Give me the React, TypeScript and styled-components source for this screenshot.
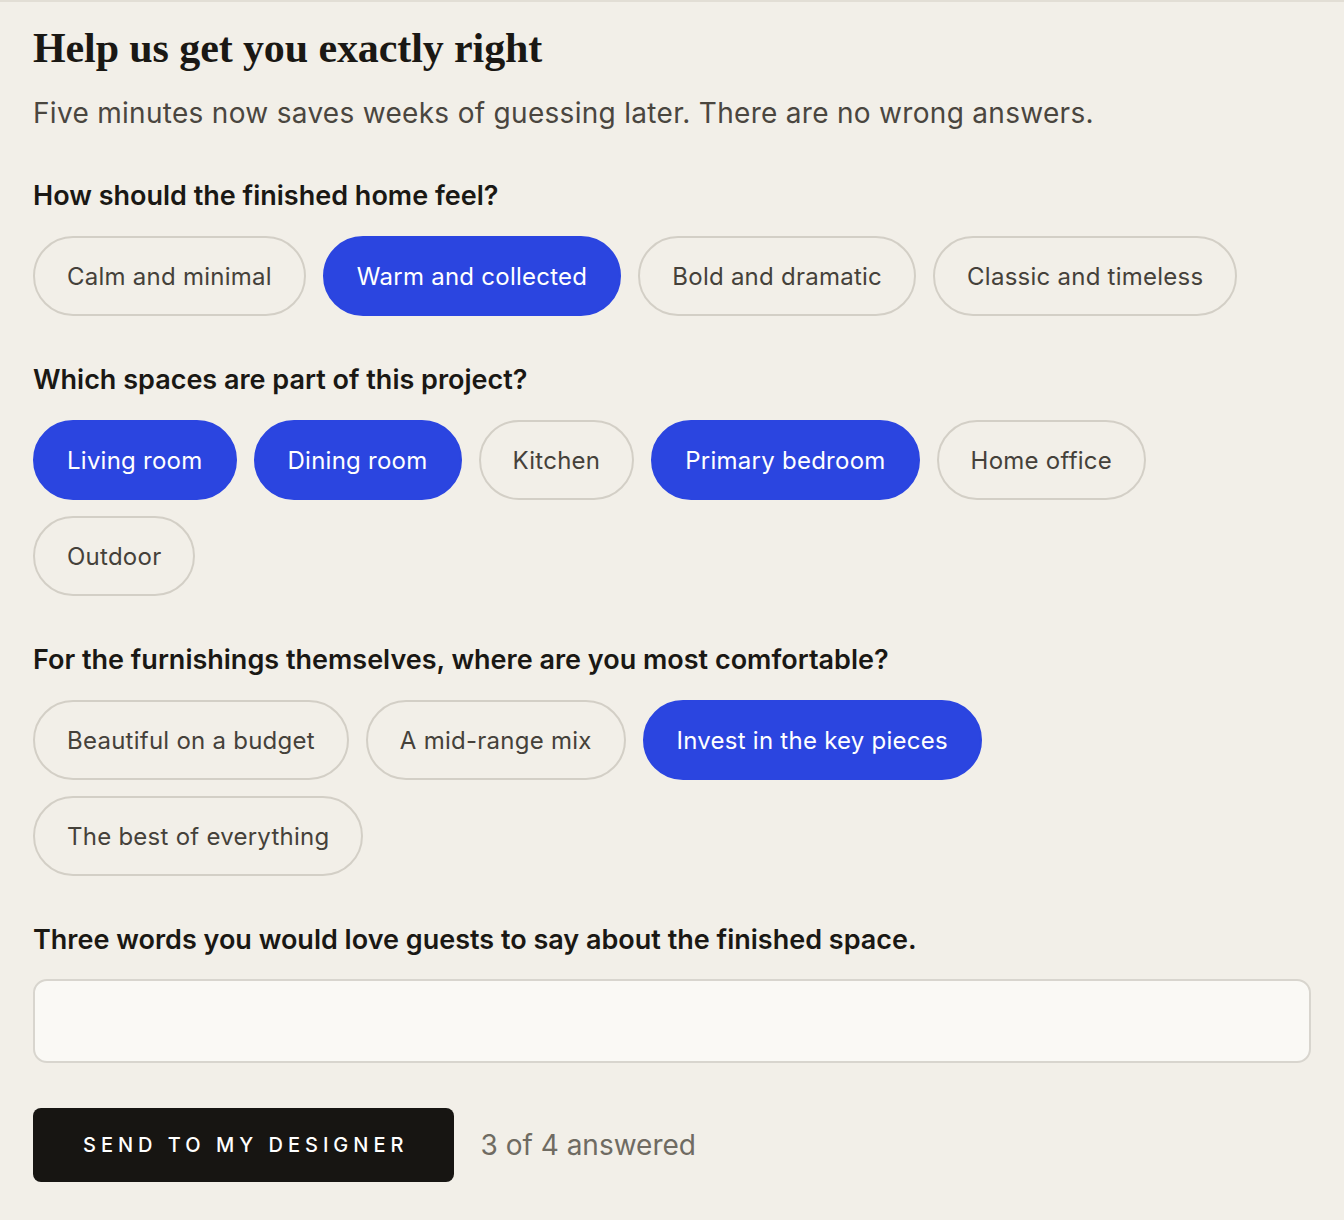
import React, { useState } from "react"
import styled, { createGlobalStyle } from "styled-components"

const GlobalStyle = createGlobalStyle`
  html, body {
    margin: 0;
    padding: 0;
    background: #f2efe8;
  }
  body {
    font-family: Inter, "Noto Sans", sans-serif;
    color: #1a1814;
  }
`

const questions = [
  {
    label: "How should the finished home feel?",
    options: ["Calm and minimal", "Warm and collected", "Bold and dramatic", "Classic and timeless"],
    initial: ["Warm and collected"],
  },
  {
    label: "Which spaces are part of this project?",
    options: ["Living room", "Dining room", "Kitchen", "Primary bedroom", "Home office", "Outdoor"],
    initial: ["Living room", "Dining room", "Primary bedroom"],
  },
  {
    label: "For the furnishings themselves, where are you most comfortable?",
    options: ["Beautiful on a budget", "A mid-range mix", "Invest in the key pieces", "The best of everything"],
    initial: ["Invest in the key pieces"],
  },
]

const App: React.FC = () => {
  const [picked, setPicked] = useState<string[][]>(questions.map((q) => q.initial))
  const [words, setWords] = useState("")

  const toggle = (qi: number, option: string) => {
    setPicked((prev) =>
      prev.map((list, i) => {
        if (i !== qi) return list
        return list.includes(option) ? list.filter((o) => o !== option) : [...list, option]
      })
    )
  }

  const answered = picked.filter((p) => p.length > 0).length + (words.trim() ? 1 : 0)

  return (
    <Root>
      <GlobalStyle />
      <Title>Help us get you exactly right</Title>
      <Intro>Five minutes now saves weeks of guessing later. There are no wrong answers.</Intro>

      {questions.map((q, qi) => (
        <Question key={q.label}>
          <Label>{q.label}</Label>
          <Pills>
            {q.options.map((option) => (
              <Pill key={option} $active={picked[qi].includes(option)} onClick={() => toggle(qi, option)}>
                {option}
              </Pill>
            ))}
          </Pills>
        </Question>
      ))}

      <Question>
        <Label>Three words you would love guests to say about the finished space.</Label>
        <WordsInput value={words} onChange={(e) => setWords(e.target.value)} />
      </Question>

      <Footer>
        <SendButton>Send to my designer</SendButton>
        <Progress>{answered} of 4 answered</Progress>
      </Footer>
    </Root>
  )
}

export default App

const Root = styled.div`
  border-top: 2px solid #e2ded5;
  padding: 21px 33px 40px 33px;
  min-height: 1220px;
  box-sizing: border-box;
`
const Title = styled.h1`
  margin: 0;
  font-family: "Liberation Serif", "DejaVu Serif", serif;
  font-weight: 700;
  font-size: 42px;
  line-height: 50px;
  letter-spacing: -0.1px;
  color: #1a1814;
`
const Intro = styled.p`
  margin: 20px 0 0 0;
  font-size: 28px;
  line-height: 40px;
  letter-spacing: 0.3px;
  color: #4a463f;
`
const Question = styled.section`
  margin-top: 47px;
  &:first-of-type {
    margin-top: 46px;
  }
`
const Label = styled.h2`
  margin: 0;
  font-size: 27px;
  line-height: 34px;
  font-weight: 600;
  color: #1a1814;
`
const Pills = styled.div`
  display: flex;
  flex-wrap: wrap;
  gap: 16px 17px;
  margin-top: 23px;
`
const Pill = styled.button<{ $active: boolean }>`
  height: 80px;
  padding: 0 32px;
  border-radius: 40px;
  border: 2px solid ${(p) => (p.$active ? "#2b45e0" : "#d3cfc6")};
  background: ${(p) => (p.$active ? "#2b45e0" : "transparent")};
  color: ${(p) => (p.$active ? "#ffffff" : "#45413a")};
  font-family: Inter, "Noto Sans", sans-serif;
  font-size: 24px;
  letter-spacing: 0.25px;
  cursor: pointer;
`
const WordsInput = styled.input`
  display: block;
  width: 100%;
  box-sizing: border-box;
  height: 84px;
  margin-top: 22px;
  padding: 0 24px;
  border: 2px solid #d8d5ce;
  border-radius: 14px;
  background: #faf9f5;
  font-family: Inter, "Noto Sans", sans-serif;
  font-size: 24px;
  color: #1a1814;
  outline: none;
`
const Footer = styled.div`
  display: flex;
  align-items: center;
  gap: 26px;
  margin-top: 45px;
`
const SendButton = styled.button`
  height: 74px;
  padding: 0 46px 0 50px;
  border: none;
  border-radius: 8px;
  background: #171512;
  color: #ffffff;
  font-family: Inter, "Noto Sans", sans-serif;
  font-size: 20px;
  font-weight: 500;
  letter-spacing: 5px;
  text-transform: uppercase;
  cursor: pointer;
`
const Progress = styled.span`
  font-size: 28px;
  color: #6f6b62;
`
